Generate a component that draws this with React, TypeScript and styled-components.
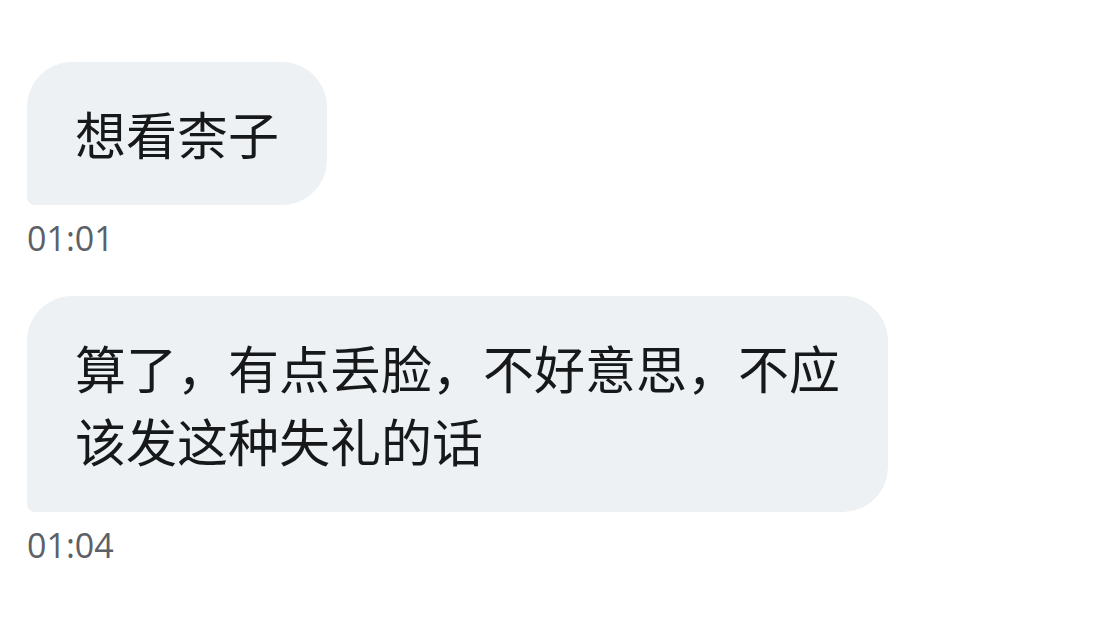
import React from "react";
import styled, { createGlobalStyle } from "styled-components";

const GlobalStyle = createGlobalStyle`
  html, body {
    margin: 0;
    padding: 0;
    background: #ffffff;
  }
`;

const Thread = styled.div`
  display: flex;
  flex-direction: column;
  align-items: flex-start;
  padding: 62px 27px 0 27px;
  gap: 39px;
`;

const Message = styled.div`
  display: flex;
  flex-direction: column;
  align-items: flex-start;
  gap: 14px;
`;

const Bubble = styled.div`
  box-sizing: border-box;
  max-width: 861px;
  padding: 35px 48px;
  background: #eef1f3;
  border-radius: 45px 45px 45px 8px;
  color: #161819;
  font-family: "Noto Sans CJK SC", "Noto Sans", sans-serif;
  font-size: 51px;
  line-height: 73px;
  word-break: break-all;
`;

const Time = styled.div`
  color: #5b6166;
  font-family: "Open Sans", Roboto, "Liberation Sans", sans-serif;
  font-size: 34px;
  line-height: 38px;
`;

const messages = [
  { text: "想看柰子", time: "01:01" },
  { text: "算了，有点丢脸，不好意思，不应该发这种失礼的话", time: "01:04" },
];

const App = () => {
  return (
    <>
      <GlobalStyle />
      <Thread>
        {messages.map((m) => (
          <Message key={m.time}>
            <Bubble>{m.text}</Bubble>
            <Time>{m.time}</Time>
          </Message>
        ))}
      </Thread>
    </>
  );
};

export default App;
